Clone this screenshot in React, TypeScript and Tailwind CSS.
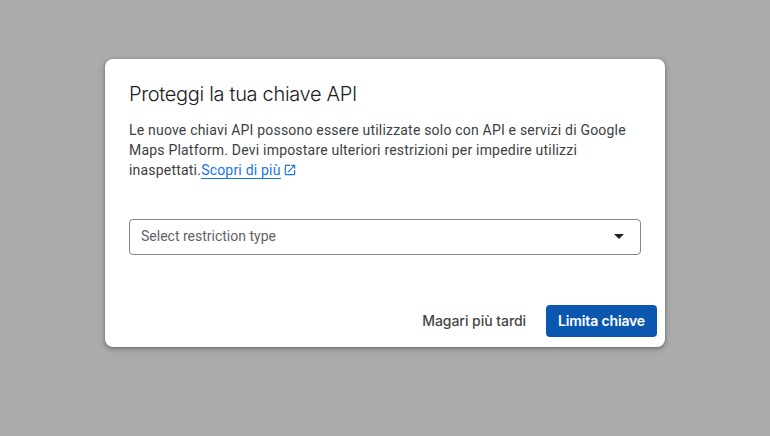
export default function App() {
  return (
    <div className="h-screen w-screen bg-[#ababab] flex justify-center pt-[59px] font-['Roboto',sans-serif]">
      <div className="w-[560px] h-[288px] bg-white rounded-lg shadow-[0_1px_3px_rgba(60,64,67,0.5),0_2px_6px_rgba(60,64,67,0.3)] flex flex-col">
        <div className="px-6 pt-[23px] flex flex-col flex-1">
          <h1 className="text-[20px] leading-[24px] text-[#202124] font-['Inter',sans-serif] font-light tracking-[-0.32px]">
            Proteggi la tua chiave API
          </h1>
          <p className="mt-[14px] text-sm leading-5 text-[#3c4043] tracking-[0.2px]">
            Le nuove chiavi API possono essere utilizzate solo con API e servizi di Google Maps Platform. Devi impostare ulteriori restrizioni per impedire utilizzi inaspettati.
            <a href="#" className="text-[#1a73e8] border-b border-[#1a73e8]">Scopri di più</a>
            <svg viewBox="0 0 24 24" className="inline-block size-[14px] ml-[2px] -mt-[2px] text-[#1a73e8]" fill="currentColor">
              <path d="M19 19H5V5h7V3H5a2 2 0 0 0-2 2v14a2 2 0 0 0 2 2h14c1.1 0 2-.9 2-2v-7h-2v7zM14 3v2h3.59l-9.83 9.83 1.41 1.41L19 6.41V10h2V3h-7z" />
            </svg>
          </p>
          <div className="mt-[39px] h-9 border border-[#80868b] rounded flex items-center justify-between pl-[11px] pr-4 pb-[2px]">
            <span className="text-sm text-[#5f6368]">Select restriction type</span>
            <svg viewBox="0 0 10 5" className="w-[10px] h-[5px] text-[#202124]" fill="currentColor">
              <path d="M0 0h10L5 5z" />
            </svg>
          </div>
        </div>
        <div className="flex justify-end items-center gap-2 pr-2 pb-[10px] font-['Inter',sans-serif]">
          <button className="h-8 px-3 text-sm font-medium text-[#444746] tracking-[-0.05px]">Magari più tardi</button>
          <button className="h-8 px-3 rounded bg-[#0b57b0] text-sm font-semibold text-white tracking-[-0.15px]">Limita chiave</button>
        </div>
      </div>
    </div>
  );
}
